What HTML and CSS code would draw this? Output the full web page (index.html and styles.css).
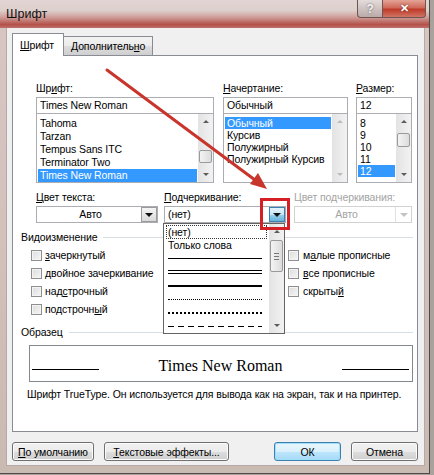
FILE: index.html
```html
<!DOCTYPE html>
<html lang="ru">
<head>
    <meta charset="UTF-8">
    <meta name="viewport" content="width=device-width, initial-scale=1.0">
    <title>Шрифт</title>
    <link rel="stylesheet" href="styles.css">
</head>
<body>
    <div class="window">
        <div class="titlebar">
            <span class="title">Шрифт</span>
            <div class="caption-btns">
                <span class="cap-btn help">?</span>
                <span class="cap-btn close">✕</span>
            </div>
        </div>

        <div class="client">
            <div class="tabs">
                <div class="tab active"><u>Ш</u>рифт</div>
                <div class="tab">Дополнитель<u>н</u>о</div>
            </div>

            <div class="panel">
                <div class="font-row">
                    <div class="field f-name">
                        <div class="lbl">Шр<u>и</u>фт:</div>
                        <div class="edit">Times New Roman</div>
                        <div class="list">
                            <div class="items step13">
                                <div class="item">Tahoma</div>
                                <div class="item">Tarzan</div>
                                <div class="item">Tempus Sans ITC</div>
                                <div class="item">Terminator Two</div>
                                <div class="item sel">Times New Roman</div>
                            </div>
                            <div class="vscroll">
                                <div class="sb-btn"><i class="tri up"></i></div>
                                <div class="sb-track"><div class="sb-thumb" style="margin-top: 21px; height: 13px;"></div></div>
                                <div class="sb-btn"><i class="tri down"></i></div>
                            </div>
                        </div>
                    </div>
                    <div class="field f-style">
                        <div class="lbl"><u>Н</u>ачертание:</div>
                        <div class="edit">Обычный</div>
                        <div class="list">
                            <div class="items">
                                <div class="item sel">Обычный</div>
                                <div class="item">Курсив</div>
                                <div class="item">Полужирный</div>
                                <div class="item">Полужирный Курсив</div>
                            </div>
                            <div class="vscroll off">
                                <div class="sb-btn"><i class="tri up"></i></div>
                                <div class="sb-track"></div>
                                <div class="sb-btn"><i class="tri down"></i></div>
                            </div>
                        </div>
                    </div>
                    <div class="field f-size">
                        <div class="lbl"><u>Р</u>азмер:</div>
                        <div class="edit">12</div>
                        <div class="list">
                            <div class="items">
                                <div class="item">8</div>
                                <div class="item">9</div>
                                <div class="item">10</div>
                                <div class="item">11</div>
                                <div class="item sel">12</div>
                            </div>
                            <div class="vscroll">
                                <div class="sb-btn"><i class="tri up"></i></div>
                                <div class="sb-track"><div class="sb-thumb" style="margin-top: 4px; height: 14px;"></div></div>
                                <div class="sb-btn"><i class="tri down"></i></div>
                            </div>
                        </div>
                    </div>
                </div>

                <div class="combo-row">
                    <div class="field c-color">
                        <div class="lbl"><u>Ц</u>вет текста:</div>
                        <div class="combo centered">
                            <span class="value">Авто</span>
                            <span class="drop"><i class="tri down"></i></span>
                        </div>
                    </div>
                    <div class="field c-under">
                        <div class="lbl"><u>П</u>одчеркивание:</div>
                        <div class="combo">
                            <span class="value">(нет)</span>
                            <span class="drop hot"><i class="tri down"></i></span>
                        </div>
                    </div>
                    <div class="field c-ucolor disabled">
                        <div class="lbl">Цвет подчеркивания:</div>
                        <div class="combo centered">
                            <span class="value">Авто</span>
                            <span class="drop"><i class="tri down"></i></span>
                        </div>
                    </div>
                </div>

                <div class="group">Видоизменение</div>
                <div class="effects">
                    <div class="col">
                        <div class="check"><span class="box"></span><u>з</u>ачеркнутый</div>
                        <div class="check"><span class="box"></span><u>д</u>войное зачеркивание</div>
                        <div class="check"><span class="box"></span>над<u>с</u>трочный</div>
                        <div class="check"><span class="box"></span>подстрочн<u>ы</u>й</div>
                    </div>
                    <div class="col">
                        <div class="check"><span class="box"></span>м<u>а</u>лые прописные</div>
                        <div class="check"><span class="box"></span><u>в</u>се прописные</div>
                        <div class="check"><span class="box"></span>скрыты<u>й</u></div>
                    </div>
                </div>

                <div class="group">Образец</div>
                <div class="sample">
                    <span class="rule"></span>
                    <span class="sample-text">Times New Roman</span>
                    <span class="rule"></span>
                </div>
                <p class="note">Шрифт TrueType. Он используется для вывода как на экран, так и на принтер.</p>
            </div>

            <div class="buttons">
                <button class="btn w-default"><u>П</u>о умолчанию</button>
                <button class="btn w-effects"><u>Т</u>екстовые эффекты...</button>
                <button class="btn w-ok primary">ОК</button>
                <button class="btn w-cancel">Отмена</button>
            </div>
        </div>

        <!-- open underline list -->
        <div class="dropdown">
            <div class="dd-items">
                <div class="dd-item focus">(нет)</div>
                <div class="dd-item">Только слова</div>
                <div class="dd-item"><span class="ln single"></span></div>
                <div class="dd-item"><span class="ln double"></span></div>
                <div class="dd-item"><span class="ln thick"></span></div>
                <div class="dd-item"><span class="ln dotted"></span></div>
                <div class="dd-item"><span class="ln dotted-bold"></span></div>
                <div class="dd-item"><span class="ln dashed"></span></div>
            </div>
            <div class="vscroll">
                <div class="sb-btn"><i class="tri up"></i></div>
                <div class="sb-track"><div class="sb-thumb grip" style="margin-top: 1px; height: 32px;"></div></div>
                <div class="sb-btn"><i class="tri down"></i></div>
            </div>
        </div>

        <svg class="pointer" width="434" height="475" viewBox="0 0 434 475">
            <line x1="107" y1="70" x2="255" y2="180" stroke="#c8352c" stroke-width="3" stroke-linecap="round"/>
            <polygon points="267,189 250,184 258,173" fill="#c8352c"/>
        </svg>
        <div class="mark"></div>
    </div>
</body>
</html>
```

FILE: styles.css
```css
* {
    box-sizing: border-box;
}
body {
    margin: 0;
    font-family: "Liberation Sans", Arial, sans-serif;
    font-size: 10.5px;
    letter-spacing: -0.1px;
    color: #000;
    background-color: #a9a29c;
}
u {
    text-decoration: underline;
    text-underline-offset: 1px;
}

/* window frame */
.window {
    position: relative;
    width: 430px;
    height: 474px;
    background: linear-gradient(180deg, #d8c6c2 0%, #d2c0bb 55%, #c9bab2 100%);
    border-right: 1px solid #4f4a47;
    border-bottom: 1px solid #4f4a47;
    overflow: hidden;
}
.titlebar {
    display: flex;
    align-items: flex-start;
    height: 28px;
    background: linear-gradient(180deg, #e1d5d3 0%, #ddcfcc 38%, #cf9c97 62%, #b4504a 88%, #c0726b 100%);
}
.title {
    margin: 7px 0 0 6px;
    font-size: 12.5px;
    line-height: 14px;
    letter-spacing: 0;
    color: #111;
}
.caption-btns {
    display: flex;
    margin-left: auto;
    margin-right: 3px;
}
.cap-btn {
    display: flex;
    align-items: center;
    justify-content: center;
    height: 18px;
    border: 1px solid #6e5552;
    border-top: none;
    font-weight: bold;
    color: #fff;
}
.help {
    width: 26px;
    border-radius: 0 0 0 4px;
    background: linear-gradient(180deg, #e3dcdb 0%, #cfc3c1 50%, #b9aaa8 100%);
    color: #f4f4f4;
    font-size: 12px;
    text-shadow: 0 0 2px #555;
}
.close {
    width: 44px;
    margin-left: -1px;
    border-radius: 0 0 4px 0;
    background: linear-gradient(180deg, #e3a496 0%, #d0695a 45%, #bf3b2a 55%, #d07563 100%);
    font-size: 11px;
    text-shadow: 0 0 2px #6a1a10;
}

.client {
    margin-left: 6px;
    width: 419px;
    height: 438px;
    padding: 0 6px 0 5px;
    background-color: #f0f0f0;
    border: 1px solid #b7a9a5;
    border-top: none;
}

/* tabs */
.tabs {
    display: flex;
    align-items: flex-end;
    height: 27px;
    padding-top: 5px;
}
.tab {
    height: 19px;
    padding: 0 7px;
    line-height: 18px;
    border: 1px solid #898c95;
    border-bottom: none;
    background: linear-gradient(180deg, #f2f2f2 0%, #ebebeb 50%, #dddddd 51%, #cfcfcf 100%);
}
.tab.active {
    position: relative;
    z-index: 1;
    width: 52px;
    height: 23px;
    margin-bottom: -1px;
    margin-right: -1px;
    line-height: 22px;
    background: #fff;
}
.panel {
    height: 377px;
    border: 1px solid #898c95;
    background: #fff;
}

/* name / style / size */
.font-row {
    display: flex;
    margin-top: 26px;
    padding-left: 23px;
}
.lbl {
    height: 13px;
    line-height: 13px;
    white-space: nowrap;
}
.edit {
    height: 17px;
    margin-top: 2px;
    padding-left: 3px;
    line-height: 15px;
    border: 1px solid #abadb3;
    background: #fff;
}
.list {
    display: flex;
    height: 70px;
    margin-top: -1px;
    border: 1px solid #abadb3;
    background: #fff;
}
.items {
    flex: 1;
    padding: 3px 1px 0 1px;
    overflow: hidden;
}
.item {
    height: 12px;
    padding-left: 2px;
    line-height: 12px;
    white-space: nowrap;
}
.step13 .item {
    height: 13px;
    line-height: 13px;
}
.item.sel {
    background: #3399ff;
    color: #fff;
}
.f-name {
    width: 178px;
}
.f-style {
    width: 125px;
    margin-left: 9px;
}
.f-size {
    width: 56px;
    margin-left: 8px;
}

/* scrollbar */
.vscroll {
    display: flex;
    flex-direction: column;
    width: 15px;
    background: linear-gradient(90deg, #e3e3e3, #f2f2f2);
}
.sb-btn {
    display: flex;
    align-items: center;
    justify-content: center;
    height: 15px;
}
.sb-track {
    flex: 1;
    padding: 0 1px;
}
.sb-thumb {
    border: 1px solid #9a9a9a;
    border-radius: 2px;
    background: linear-gradient(90deg, #f3f3f3, #dcdcdc);
}
.sb-thumb.grip {
    display: flex;
    align-items: center;
    justify-content: center;
}
.sb-thumb.grip::before {
    content: "";
    width: 5px;
    height: 5px;
    border-top: 1px solid #777;
    border-bottom: 1px solid #777;
    background: linear-gradient(180deg, transparent 2px, #777 2px, #777 3px, transparent 3px);
}
.tri {
    width: 0;
    height: 0;
    border-left: 3px solid transparent;
    border-right: 3px solid transparent;
}
.tri.up {
    border-bottom: 3px solid #5c5c5c;
}
.tri.down {
    border-top: 3px solid #5c5c5c;
}
.vscroll.off .tri.up {
    border-bottom-color: #bcbcbc;
}
.vscroll.off .tri.down {
    border-top-color: #bcbcbc;
}

/* combo boxes */
.combo-row {
    display: flex;
    margin-top: 8px;
    padding-left: 23px;
}
.c-color {
    width: 122px;
}
.c-under {
    width: 122px;
    margin-left: 6px;
}
.c-ucolor {
    width: 118px;
    margin-left: 8px;
}
.combo {
    display: flex;
    height: 17px;
    margin-top: 2px;
    border: 1px solid #abadb3;
    background: #fff;
}
.combo .value {
    flex: 1;
    padding-left: 3px;
    line-height: 15px;
}
.combo.centered .value {
    text-align: center;
}
.drop {
    display: flex;
    align-items: center;
    justify-content: center;
    width: 16px;
    border: 1px solid #9b9b9b;
    background: linear-gradient(180deg, #f4f4f4, #dadada);
}
.drop .tri.down {
    border-left-width: 4px;
    border-right-width: 4px;
    border-top: 4px solid #111;
}
.drop.hot {
    border-color: #3c7fb1;
    background: linear-gradient(180deg, #e5f4fc 0%, #c4e5f6 50%, #98d1ef 51%, #68b3db 100%);
}
.disabled .lbl {
    color: #a3a3a3;
}
.disabled .combo {
    border-color: #d2d2d2;
}
.disabled .value {
    color: #a3a3a3;
}
.disabled .drop {
    border: none;
    border-left: 1px solid #e2e2e2;
    background: #fff;
}
.disabled .drop .tri.down {
    border-top-color: #c4c4c4;
}

/* group captions */
.group {
    display: flex;
    align-items: center;
    height: 13px;
    margin: 8px 4px 0 8px;
    line-height: 13px;
}
.group::after {
    content: "";
    flex: 1;
    margin-left: 6px;
    border-top: 1px solid #d5dfe5;
}

/* effects checkboxes */
.effects {
    display: flex;
    margin-top: 2px;
    padding-left: 18px;
}
.effects .col:first-child {
    width: 257px;
}
.check {
    display: flex;
    align-items: center;
    height: 18px;
}
.box {
    width: 11px;
    height: 11px;
    margin-right: 3px;
    border: 1px solid #8f8f8f;
    background: linear-gradient(135deg, #dcdcdc, #f6f6f6);
    box-shadow: inset 0 0 0 1px #f4f4f4;
}
.effects .col + .col .box {
    margin-right: 4px;
}

/* preview */
.sample {
    display: flex;
    align-items: flex-end;
    height: 37px;
    margin: 6px 4px 0 16px;
    padding: 0 3px 11px 2px;
    border: 1px solid #828790;
}
.rule {
    width: 67px;
    border-bottom: 1px solid #000;
}
.sample-text {
    flex: 1;
    margin-bottom: -4px;
    font-family: "Liberation Serif", "Times New Roman", serif;
    font-size: 16px;
    line-height: 16px;
    letter-spacing: 0;
    text-align: center;
}
.note {
    margin: 6px 0 0 14px;
    line-height: 13px;
    white-space: nowrap;
}

/* bottom buttons */
.buttons {
    display: flex;
    margin-top: 10px;
    gap: 10px;
}
.btn {
    height: 19px;
    padding: 0;
    font-family: inherit;
    font-size: 10.5px;
    letter-spacing: -0.1px;
    color: #000;
    border: 1px solid #707070;
    border-radius: 3px;
    background: linear-gradient(180deg, #f2f2f2 0%, #ebebeb 50%, #dddddd 51%, #cfcfcf 100%);
    box-shadow: inset 0 0 0 1px #fbfbfb;
}
.w-default {
    width: 82px;
}
.w-effects {
    width: 125px;
}
.w-ok {
    width: 67px;
    margin-left: auto;
}
.w-cancel {
    width: 67px;
}
.btn.primary {
    border-color: #3c7fb1;
    box-shadow: inset 0 0 0 1px #9fe0f8;
    background: linear-gradient(180deg, #eaf6fd 0%, #d9f0fc 50%, #bee6fd 51%, #a7d9f5 100%);
}

/* underline dropdown, opened over the panel */
.dropdown {
    position: absolute;
    left: 163px;
    top: 223px;
    display: flex;
    width: 122px;
    height: 111px;
    border: 1px solid #646464;
    background: #fff;
}
.dd-items {
    flex: 1;
    padding: 1px 2px 0 2px;
}
.dd-item {
    display: flex;
    align-items: center;
    height: 13.5px;
    padding-left: 2px;
    white-space: nowrap;
}
.dd-item.focus {
    outline: 1px dotted #333;
    outline-offset: -1px;
}
.ln {
    width: 94px;
}
.ln.single {
    border-top: 1px solid #000;
}
.ln.double {
    height: 4px;
    border-top: 1px solid #000;
    border-bottom: 1px solid #000;
}
.ln.thick {
    border-top: 2px solid #000;
}
.ln.dotted {
    border-top: 1px dotted #000;
}
.ln.dotted-bold {
    border-top: 2px dotted #000;
}
.ln.dashed {
    height: 1px;
    background: repeating-linear-gradient(90deg, #000 0 6px, transparent 6px 10px);
}
.dropdown .vscroll {
    width: 15px;
}

/* red callouts */
.pointer {
    position: absolute;
    left: 0;
    top: 0;
    pointer-events: none;
}
.mark {
    position: absolute;
    left: 260px;
    top: 198px;
    width: 30px;
    height: 32px;
    border: 3px solid #d41f24;
}
```
